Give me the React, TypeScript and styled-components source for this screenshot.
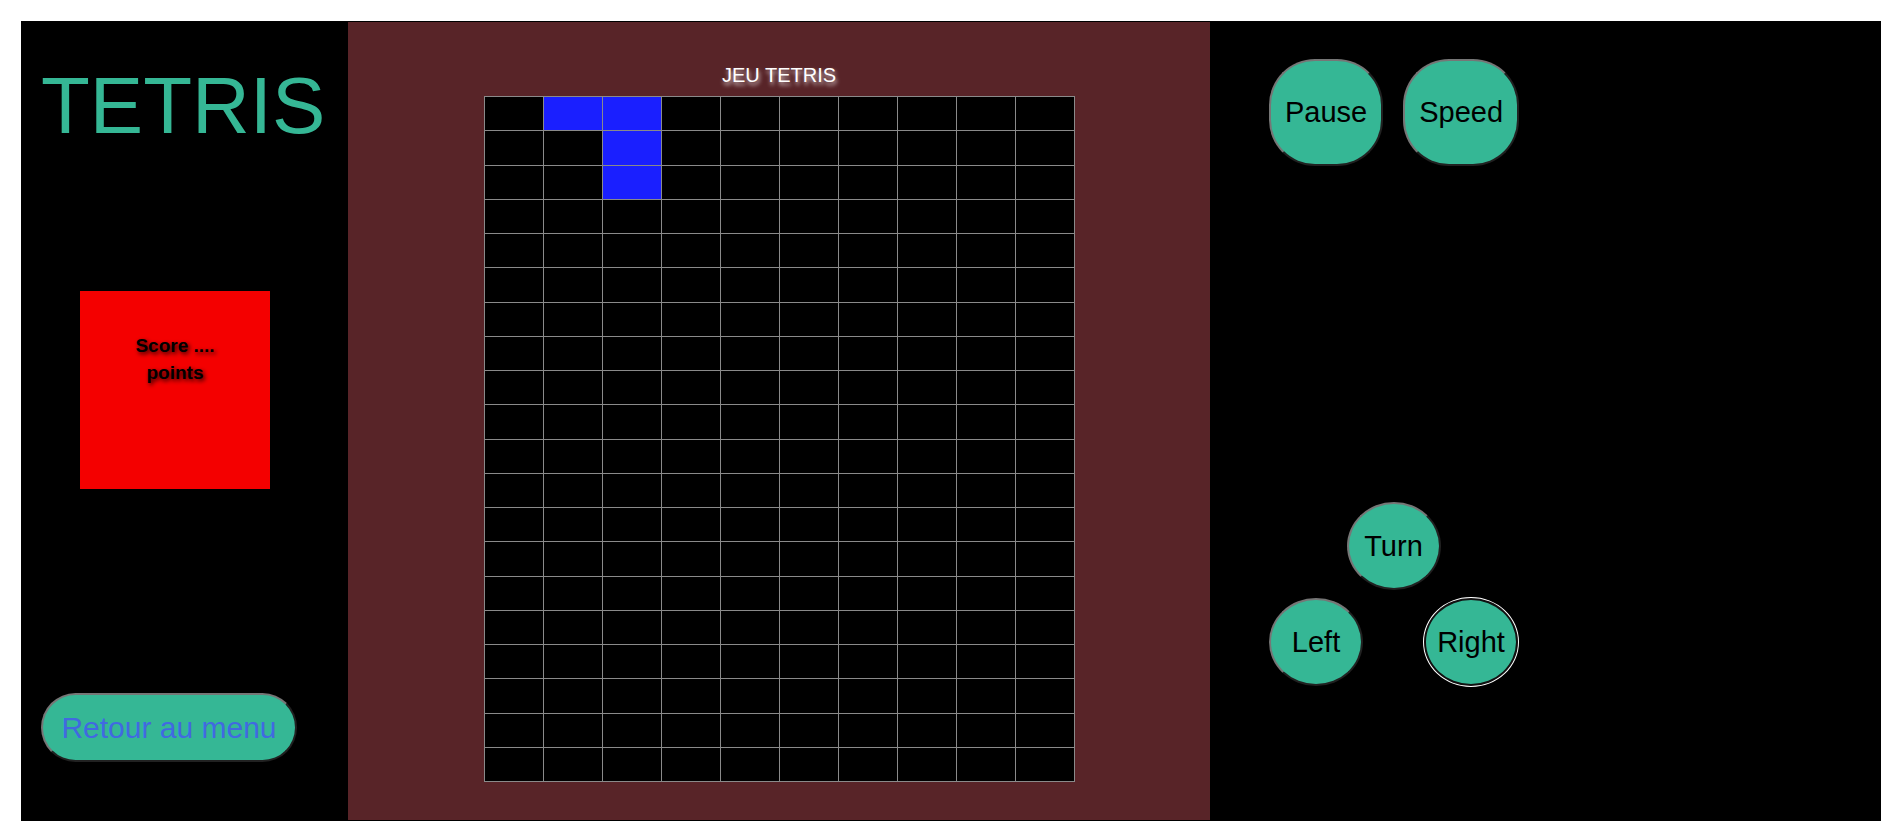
import React from "react";
import styled, { createGlobalStyle } from "styled-components";

const GREEN = "#35b795";

const Global = createGlobalStyle`
  html, body {
    margin: 0;
    padding: 0;
    background: #ffffff;
    font-family: "Liberation Sans", Arial, sans-serif;
  }
  * { box-sizing: border-box; }
`;

const Frame = styled.div`
  margin: 21px 0 0 21px;
  width: 1860px;
  height: 800px;
  border: 1px solid #000;
  background: #000;
  display: flex;
`;

const LeftColumn = styled.div`
  width: 326px;
  display: flex;
  flex-direction: column;
  align-items: flex-start;
  padding: 38px 0 0 19px;
`;

const Title = styled.h1`
  margin: 0;
  font-size: 80px;
  font-weight: 400;
  line-height: 92px;
  color: ${GREEN};
`;

const ScoreBox = styled.div`
  margin: 139px 0 0 39px;
  width: 190px;
  height: 198px;
  background: #f40000;
  padding-top: 41px;
`;

const ScoreText = styled.h3`
  margin: 0;
  padding: 0 40px;
  font-size: 19px;
  font-weight: 700;
  line-height: 27px;
  text-align: center;
  color: #000;
  text-shadow: 2px 2px 4px rgba(0, 0, 0, 0.85);
`;

const MenuButton = styled.button`
  margin-top: 204px;
  width: 256px;
  height: 69px;
  border: 2px outset #767676;
  border-radius: 35px;
  background: ${GREEN};
  color: royalblue;
  font-family: "Liberation Sans", Arial, sans-serif;
  font-size: 30px;
  padding: 0;
`;

const Board = styled.div`
  width: 862px;
  background: #582428;
  display: flex;
  flex-direction: column;
  align-items: center;
  padding-top: 42px;
`;

const BoardTitle = styled.div`
  margin: 0 0 9px;
  font-size: 20px;
  line-height: 23px;
  color: #fff;
  text-shadow: 1px 3px 4px rgba(255, 255, 255, 0.8);
`;

const Grid = styled.div`
  width: 591px;
  height: 686px;
  padding: 1px;
  gap: 1px;
  background: #8a8a8a;
  display: grid;
  grid-template-columns: repeat(10, 1fr);
  grid-template-rows: repeat(20, 1fr);
`;

const Cell = styled.div<{ $filled: boolean }>`
  background: ${(p) => (p.$filled ? "#1a1fff" : "#000")};
`;

const Controls = styled.div`
  flex: 1;
  display: flex;
  flex-direction: column;
  align-items: flex-start;
  padding: 37px 0 0 59px;
`;

const TopRow = styled.div`
  display: flex;
  gap: 20px;
`;

const RoundedButton = styled.button`
  height: 107px;
  min-width: 113px;
  padding: 0 14px;
  border: 2px outset #767676;
  border-radius: 46px;
  background: ${GREEN};
  color: #000;
  font-family: "Liberation Sans", Arial, sans-serif;
  font-size: 29px;
`;

const Pad = styled.div`
  margin-top: 336px;
  width: 249px;
  display: flex;
  flex-direction: column;
  align-items: center;
  gap: 8px;
`;

const PadRow = styled.div`
  width: 100%;
  display: flex;
  justify-content: space-between;
`;

const CircleButton = styled.button<{ $focused?: boolean }>`
  width: 94px;
  height: 88px;
  padding: 0;
  border: ${(p) => (p.$focused ? "2px solid #111" : "2px outset #767676")};
  outline: ${(p) => (p.$focused ? "1px solid #fff" : "none")};
  border-radius: 50%;
  background: ${GREEN};
  color: #000;
  font-family: "Liberation Sans", Arial, sans-serif;
  font-size: 29px;
`;

const filled = new Set(["0-1", "0-2", "1-2", "2-2"]);

export default function App() {
  const cells: React.ReactNode[] = [];
  for (let r = 0; r < 20; r++) {
    for (let c = 0; c < 10; c++) {
      cells.push(<Cell key={`${r}-${c}`} $filled={filled.has(`${r}-${c}`)} />);
    }
  }
  return (
    <>
      <Global />
      <Frame>
        <LeftColumn>
          <Title>TETRIS</Title>
          <ScoreBox>
            <ScoreText>Score .... points</ScoreText>
          </ScoreBox>
          <MenuButton>Retour au menu</MenuButton>
        </LeftColumn>
        <Board>
          <BoardTitle>JEU TETRIS</BoardTitle>
          <Grid>{cells}</Grid>
        </Board>
        <Controls>
          <TopRow>
            <RoundedButton>Pause</RoundedButton>
            <RoundedButton>Speed</RoundedButton>
          </TopRow>
          <Pad>
            <CircleButton>Turn</CircleButton>
            <PadRow>
              <CircleButton>Left</CircleButton>
              <CircleButton $focused>Right</CircleButton>
            </PadRow>
          </Pad>
        </Controls>
      </Frame>
    </>
  );
}
